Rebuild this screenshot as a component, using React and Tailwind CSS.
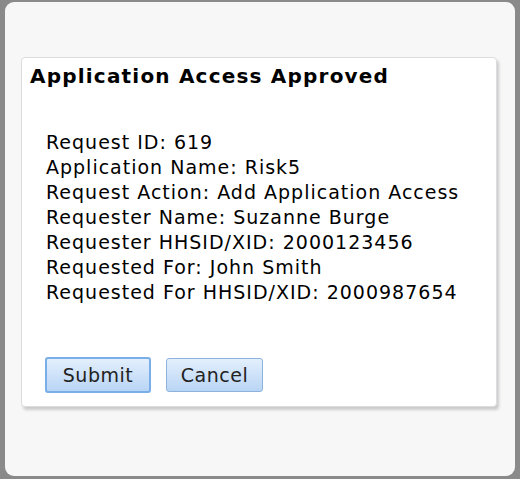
import React from "react";

const details = [
  ["Request ID", "619"],
  ["Application Name", "Risk5"],
  ["Request Action", "Add Application Access"],
  ["Requester Name", "Suzanne Burge"],
  ["Requester HHSID/XID", "2000123456"],
  ["Requested For", "John Smith"],
  ["Requested For HHSID/XID", "2000987654"],
];

const App = () => {
  return (
    <div className="w-[520px] h-[479px] bg-[#8a8a8a] pt-[2px] pl-[5px] pr-[5px] pb-[3px] font-['DejaVu_Sans',Verdana,sans-serif]">
      <div className="h-full bg-[#f7f7f8] rounded-[9px] pt-[55px] pl-[16px] pr-[18px]">
        <div className="h-[350px] bg-white border border-[#dcdde0] rounded-[4px] shadow-[2px_3px_3px_rgba(0,0,0,0.18)]">
          <h2 className="pl-[8px] pt-[6px] text-[20px] tracking-[1.2px] font-bold text-black leading-[24px]">
            Application Access Approved
          </h2>

          <div className="pl-[24px] pt-[42px] text-[19px] tracking-[1px] leading-[25px] text-black">
            {details.map(([label, value]) => (
              <div key={label}>
                {label}: {value}
              </div>
            ))}
          </div>

          <div className="flex gap-[15px] pl-[23px] pt-[52px]">
            <button className="w-[106px] h-[36px] rounded-[3px] border-2 border-[#7aaee8] bg-gradient-to-b from-[#e3effc] to-[#b9d5f5] text-[19px] tracking-[0.5px] text-[#222] leading-none">
              Submit
            </button>
            <button className="w-[97px] h-[34px] mt-[1px] rounded-[3px] border border-[#8db3dd] bg-gradient-to-b from-[#e3effc] to-[#b9d5f5] text-[19px] tracking-[0.5px] text-[#222] leading-none">
              Cancel
            </button>
          </div>
        </div>
      </div>
    </div>
  );
};

export default App;
